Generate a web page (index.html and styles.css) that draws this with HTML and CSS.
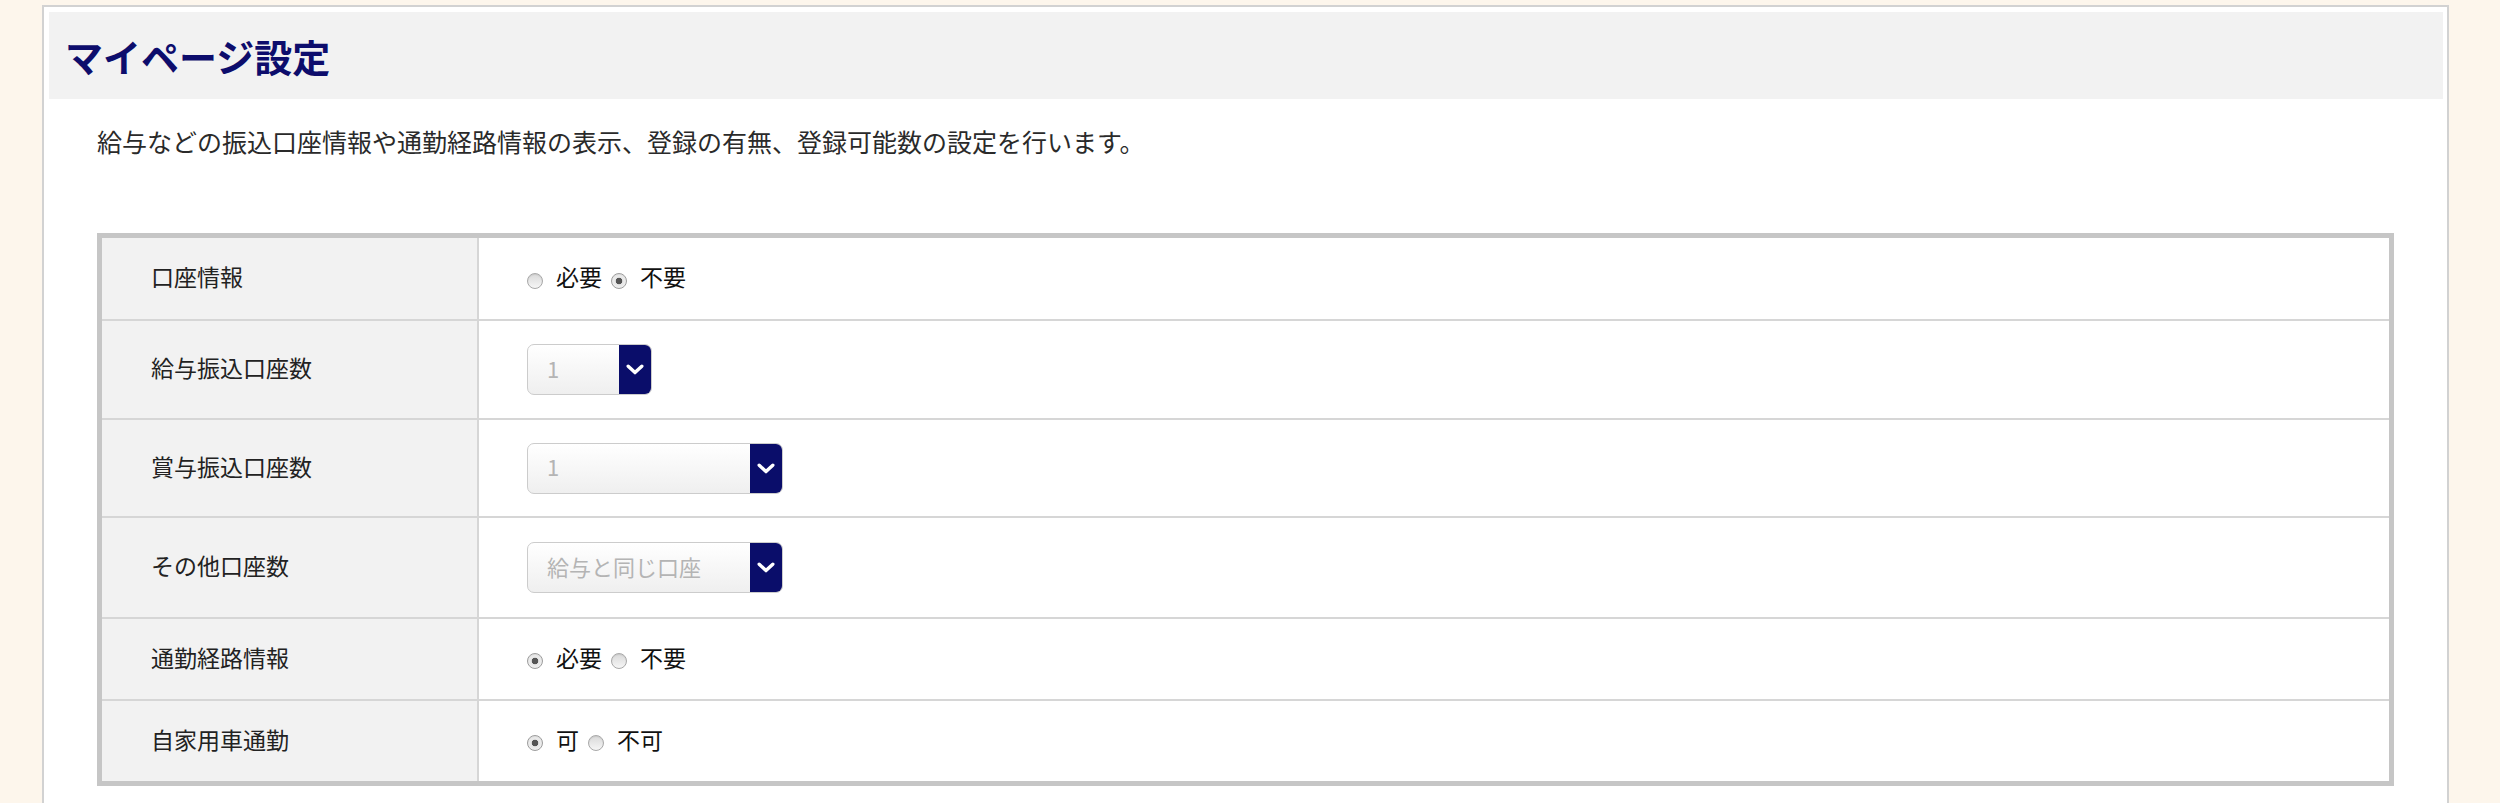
FILE: index.html
```html
<!DOCTYPE html>
<html lang="ja">
<head>
<meta charset="utf-8">
<title>マイページ設定</title>
<link rel="stylesheet" href="styles.css">
</head>
<body>
<div class="page">
  <section class="panel">
    <header class="panel-header">
      <h1 class="panel-title">マイページ設定</h1>
    </header>
    <p class="panel-desc">給与などの振込口座情報や通勤経路情報の表示、登録の有無、登録可能数の設定を行います。</p>

    <div class="settings">
      <div class="settings-row row-first">
        <div class="cell-label">口座情報</div>
        <div class="cell-value">
          <label class="choice"><input class="radio" type="radio" name="account">必要</label>
          <label class="choice"><input class="radio" type="radio" name="account" checked>不要</label>
        </div>
      </div>
      <div class="settings-row row-select-a">
        <div class="cell-label">給与振込口座数</div>
        <div class="cell-value">
          <div class="select select-short">
            <span class="select-value">1</span>
            <span class="select-arrow"><svg viewBox="0 0 18 11" width="18" height="11"><path d="M2.2 2.2 L9 8.6 L15.8 2.2" fill="none" stroke="#fff" stroke-width="3.4" stroke-linecap="round" stroke-linejoin="round"/></svg></span>
          </div>
        </div>
      </div>
      <div class="settings-row row-select-b">
        <div class="cell-label">賞与振込口座数</div>
        <div class="cell-value">
          <div class="select select-long">
            <span class="select-value">1</span>
            <span class="select-arrow"><svg viewBox="0 0 18 11" width="18" height="11"><path d="M2.2 2.2 L9 8.6 L15.8 2.2" fill="none" stroke="#fff" stroke-width="3.4" stroke-linecap="round" stroke-linejoin="round"/></svg></span>
          </div>
        </div>
      </div>
      <div class="settings-row row-select-c">
        <div class="cell-label">その他口座数</div>
        <div class="cell-value">
          <div class="select select-long">
            <span class="select-value">給与と同じ口座</span>
            <span class="select-arrow"><svg viewBox="0 0 18 11" width="18" height="11"><path d="M2.2 2.2 L9 8.6 L15.8 2.2" fill="none" stroke="#fff" stroke-width="3.4" stroke-linecap="round" stroke-linejoin="round"/></svg></span>
          </div>
        </div>
      </div>
      <div class="settings-row row-radio">
        <div class="cell-label">通勤経路情報</div>
        <div class="cell-value">
          <label class="choice"><input class="radio" type="radio" name="route" checked>必要</label>
          <label class="choice"><input class="radio" type="radio" name="route">不要</label>
        </div>
      </div>
      <div class="settings-row row-radio">
        <div class="cell-label">自家用車通勤</div>
        <div class="cell-value">
          <label class="choice"><input class="radio" type="radio" name="car" checked>可</label>
          <label class="choice"><input class="radio" type="radio" name="car">不可</label>
        </div>
      </div>
    </div>
  </section>
</div>
</body>
</html>
```

FILE: styles.css
```css
* { box-sizing: border-box; }

html, body {
  margin: 0;
  padding: 0;
  background: #fdf6ec;
  font-family: "Noto Sans CJK JP", "Noto Sans", sans-serif;
  color: #222;
}

.page {
  padding: 5px 51px 0 42px;
  height: 803px;
  overflow: hidden;
}

.panel {
  background: #fff;
  border: 2px solid #d2d2d2;
  border-bottom: none;
  padding: 5px 4px 40px 5px;
  min-height: 820px;
}

.panel-header {
  height: 87px;
  background: #f2f2f2;
  display: flex;
  align-items: center;
  padding-left: 16px;
}

.panel-title {
  margin: 0;
  font-size: 38px;
  font-weight: 700;
  line-height: 1;
  color: #0d0d6c;
}

.panel-desc {
  margin: 0 0 0 48px;
  padding-top: 24px;
  font-size: 25px;
  line-height: 36px;
  color: #2a2a2a;
}

.settings {
  margin: 74px 49px 0 48px;
  border: 5px solid #c6c6c6;
}

.settings-row {
  display: grid;
  grid-template-columns: 377px 1fr;
  border-top: 2px solid #d6d6d6;
}

.row-first { border-top: none; height: 81px; }
.row-select-a { height: 99px; }
.row-select-b { height: 98px; }
.row-select-c { height: 101px; }
.row-radio { height: 82px; }

.cell-label {
  background: #f2f2f2;
  border-right: 2px solid #d6d6d6;
  padding: 0 0 5px 49px;
  display: flex;
  align-items: center;
  font-size: 23px;
  color: #222;
}

.cell-value {
  padding-left: 48px;
  display: flex;
  align-items: center;
  font-size: 23px;
  color: #111;
}

.choice {
  display: inline-flex;
  align-items: center;
  margin-right: 9px;
  padding-bottom: 5px;
}

.radio {
  appearance: none;
  -webkit-appearance: none;
  width: 16px;
  height: 16px;
  margin: 9px 13px 0 0;
  border-radius: 50%;
  border: 1px solid #a8a8a8;
  background: linear-gradient(#d9d9d9, #f6f6f6);
  box-shadow: inset 0 1px 1px rgba(0,0,0,0.08);
}

.radio:checked {
  border-color: #9c9c9c;
  background: radial-gradient(circle, #555 0, #555 3px, #e6e6e6 3.6px, #f7f7f7 100%);
}

.select {
  display: flex;
  height: 51px;
  border: 1px solid #cccccc;
  border-radius: 7px;
  overflow: hidden;
  background: linear-gradient(#ffffff, #efefef);
}

.select-short { width: 125px; }
.select-long { width: 256px; }

.select-value {
  flex: 1;
  display: flex;
  align-items: center;
  padding: 0 0 4px 19px;
  font-size: 22px;
  color: #b4b4b4;
}

.select-arrow {
  width: 32px;
  background: #0a0d6a;
  display: flex;
  align-items: center;
  justify-content: center;
}

.select-arrow svg { display: block; }
```
